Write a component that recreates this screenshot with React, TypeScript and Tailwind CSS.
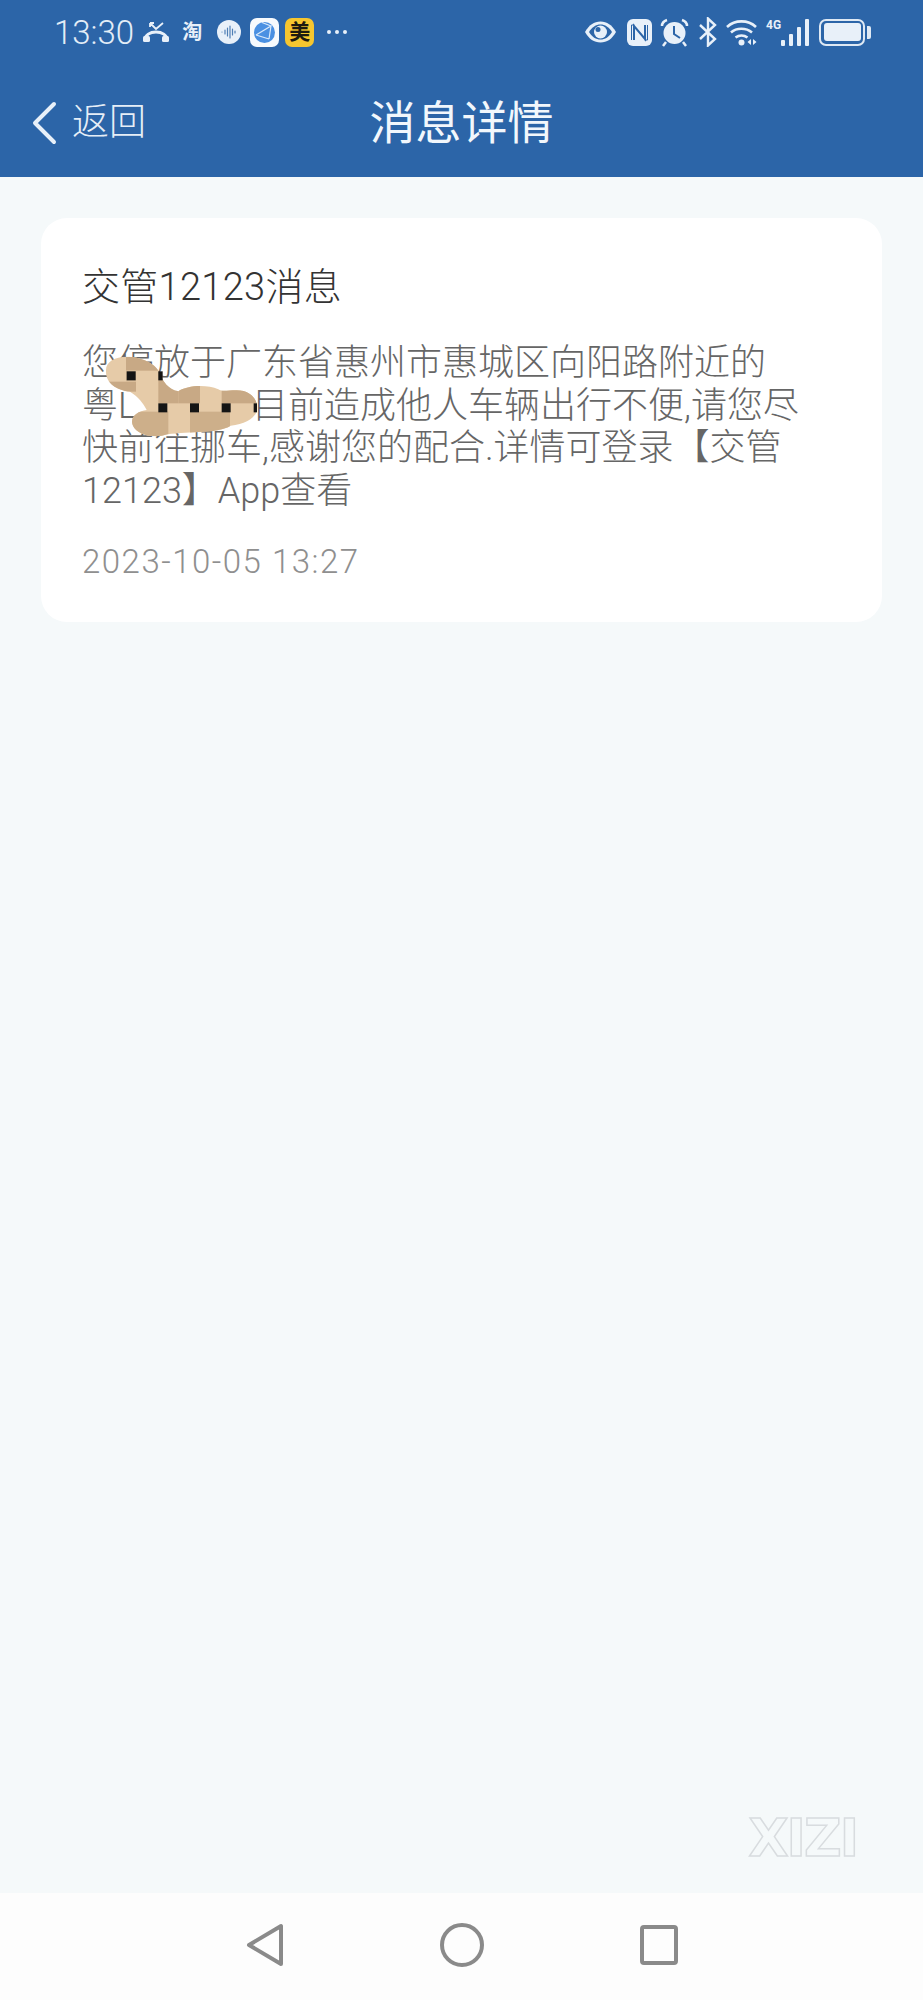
import React from 'react';

const ICON = '#e8f0f9';
const BAR = '#2c65a8';

const StatusLeft = () => (
  <div className="flex items-center">
    <span className="text-[33px] font-light leading-none text-[#e3edf7]">13:30</span>
    {/* missed call */}
    <svg className="ml-[8px]" width="28" height="22" viewBox="0 0 28 22">
      <path d="M3 19c0-5 5-8 11-8s11 3 11 8" fill="none" stroke={ICON} strokeWidth="3" />
      <rect x="1" y="15" width="7" height="6" rx="1.5" fill={ICON} />
      <rect x="20" y="15" width="7" height="6" rx="1.5" fill={ICON} />
      <path d="M8 2l6 6 7-6M8 2v4M8 2h4" fill="none" stroke={ICON} strokeWidth="1.8" />
    </svg>
    <span className="ml-[12px] w-[22px] text-[20px] font-bold leading-none text-[#e8f0f9]">淘</span>
    {/* sound circle */}
    <svg className="ml-[13px]" width="24" height="24" viewBox="0 0 24 24">
      <circle cx="12" cy="12" r="12" fill={ICON} />
      <path d="M5 12v0M8 10v4M10.500 8v8M13 6v12M15.500 9v6M18 11v2" stroke="#4f7fb5" strokeWidth="1.200" strokeLinecap="round" />
    </svg>
    {/* browser globe */}
    <svg className="ml-[9px]" width="29" height="29" viewBox="0 0 29 29">
      <rect width="29" height="29" rx="7" fill="#f7fafd" />
      <circle cx="14.500" cy="14.500" r="10.500" fill="#4a90e2" />
      <path d="M6 17l15-9-2 13M6 17l13 4M12 4.500l9 3.500" fill="none" stroke="#d9e9fa" strokeWidth="1.200" />
    </svg>
    <span className="ml-[6px] flex h-[29px] w-[29px] items-center justify-center rounded-[7px] bg-[#f6c62f] text-[21px] font-bold leading-none text-[#1d1a10]">美</span>
    <svg className="ml-[12px]" width="22" height="6" viewBox="0 0 22 6">
      <circle cx="3" cy="3" r="2" fill={ICON} />
      <circle cx="11" cy="3" r="2" fill={ICON} />
      <circle cx="19" cy="3" r="2" fill={ICON} />
    </svg>
  </div>
);

const StatusRight = () => (
  <div className="flex items-center">
    {/* eye */}
    <svg width="33" height="24" viewBox="0 0 33 24">
      <path d="M1 12C5 5 10 1.500 16.500 1.500S28 5 32 12c-4 7-9 10.500-15.500 10.500S5 19 1 12z" fill={ICON} />
      <path d="M5 12c3-5 7-7.500 11.500-7.500S25 7 28 12c-3 5-7 7.500-11.500 7.500S8 17 5 12z" fill={BAR} />
      <circle cx="16.500" cy="12" r="6.500" fill={ICON} />
      <circle cx="14" cy="9.500" r="2.500" fill={BAR} />
    </svg>
    {/* nfc */}
    <svg className="ml-[10px]" width="25" height="27" viewBox="0 0 25 27">
      <rect width="25" height="27" rx="6" fill={ICON} />
      <path d="M7 21V7l11 13V6" fill="none" stroke={BAR} strokeWidth="2" />
      <path d="M4.500 21V6h3M20.500 6v15h-3" fill="none" stroke={BAR} strokeWidth="1" />
    </svg>
    {/* alarm */}
    <svg className="ml-[8px]" width="29" height="29" viewBox="0 0 29 29">
      <circle cx="14.500" cy="15" r="11" fill={ICON} />
      <path d="M14 8v8l6 4" fill="none" stroke={BAR} strokeWidth="2" />
      <path d="M2 8c0-3 2-5 5-6M27 8c0-3-2-5-5-6M6 24l-3 4M23 24l3 4" fill="none" stroke={ICON} strokeWidth="2.500" />
    </svg>
    {/* bluetooth */}
    <svg className="ml-[9px]" width="19" height="30" viewBox="0 0 19 30">
      <path d="M2 8l15 14-7 6.500V1.500l7 6.500L2 22" fill="none" stroke={ICON} strokeWidth="2.400" />
    </svg>
    {/* wifi */}
    <svg className="ml-[9px]" width="32" height="27" viewBox="0 0 32 27">
      <path d="M1 8c8-7.500 21-7.500 29 0M5 13.500c5.500-5 15-5 21 0M9.500 18.500c3.500-2.500 8.500-2.500 12 0" fill="none" stroke={ICON} strokeWidth="2.600" />
      <circle cx="15.500" cy="23.500" r="3" fill={ICON} />
      <path d="M25 20v6l-3.500-3zM27 20v6l3.500-3z" fill={ICON} />
    </svg>
    {/* 4G + signal */}
    <div className="relative ml-[8px] h-[27px] w-[43px]">
      <span className="absolute left-0 top-0 text-[12px] font-bold leading-[12px] text-[#e8f0f9]">4G</span>
      <svg className="absolute bottom-0 right-0" width="28" height="27" viewBox="0 0 28 27">
        <rect x="0" y="21" width="4" height="6" rx="1" fill={ICON} />
        <rect x="8" y="15" width="4" height="12" rx="1" fill={ICON} />
        <rect x="16" y="8" width="4" height="19" rx="1" fill={ICON} />
        <rect x="24" y="0" width="4" height="27" rx="1" fill={ICON} />
      </svg>
    </div>
    {/* battery */}
    <div className="ml-[10px] flex items-center gap-[2px]">
      <div className="h-[27px] w-[46px] rounded-[7px] border-[2.500px] border-[#dfe9f4] p-[2.500px]">
        <div className="h-full w-full rounded-[3px] bg-[#e8f0f9]" />
      </div>
      <div className="h-[13px] w-[4px] rounded-r-[2px] bg-[#dfe9f4]" />
    </div>
  </div>
);

// mosaic smeared over the plate number
const Mosaic = () => (
  <svg className="absolute left-[49px] top-[122px]" width="190" height="110" viewBox="0 0 570 330">
    <defs>
      <clipPath id="blob">
        <path d="M48 90C48 65 75 50 110 50c40 0 85 18 97 46 10 28 30 54 58 58 25-18 85-22 120-6 12 8 25 3 55 3 40 0 62 26 62 52s-30 50-80 54c-40 24-120 16-190 26-40 15-104 0-106-38 0-20 22-32 44-35-10-20-25-40-50-55-40-5-72-25-72-60z" />
      </clipPath>
    </defs>
    <g clipPath="url(#blob)">
      <rect width="570" height="330" fill="#e6cba8" />
      <rect x="108" y="40" width="97" height="52" fill="#c8a985" />
      <rect x="50" y="125" width="88" height="30" fill="#c8a985" />
      <rect x="205" y="90" width="60" height="100" fill="#c8a985" />
      <rect x="265" y="130" width="65" height="60" fill="#c8a985" />
      <rect x="395" y="145" width="110" height="45" fill="#c8a985" />
      <rect x="120" y="215" width="115" height="80" fill="#cdaf8a" />
      <rect x="300" y="215" width="120" height="70" fill="#cdaf8a" />
      <rect x="108" y="92" width="30" height="33" fill="#d8bc98" />
    </g>
    <rect x="110" y="94" width="27" height="27" fill="#141414" />
    <rect x="205" y="94" width="13" height="27" fill="#141414" />
    <rect x="205" y="190" width="27" height="27" fill="#141414" />
    <rect x="300" y="190" width="27" height="27" fill="#141414" />
    <rect x="395" y="190" width="27" height="27" fill="#141414" />
    <rect x="491" y="190" width="10" height="27" fill="#141414" />
  </svg>
);

export default function App() {
  return (
    <div
      className="flex h-[2000px] w-[923px] flex-col overflow-hidden bg-[#f5f9fa]"
      style={{ fontFamily: 'Roboto, "Noto Sans CJK SC", sans-serif' }}
    >
      {/* Top bar */}
      <header className="h-[177px] bg-[#2c65a8]">
        <div className="flex h-[64px] items-center justify-between pl-[54px] pr-[52px]">
          <StatusLeft />
          <StatusRight />
        </div>
        <div className="grid h-[113px] grid-cols-3 items-center pt-[4px]">
          <div className="flex items-center pl-[31px]">
            <svg width="26" height="44" viewBox="0 0 26 44">
              <path d="M23 3L4 22l19 19" fill="none" stroke="#e8f0f9" strokeWidth="4" strokeLinecap="round" strokeLinejoin="round" />
            </svg>
            <span className="ml-[15px] text-[37px] font-light leading-none text-[#e6eef7]">返回</span>
          </div>
          <h1 className="whitespace-nowrap text-center text-[46px] font-normal leading-none text-[#f2f7fc]">消息详情</h1>
          <div />
        </div>
      </header>

      {/* Message */}
      <main className="flex flex-1 flex-col px-[41px] pt-[41px]">
        <section className="relative rounded-[26px] bg-white pb-[40px] pl-[41px] pr-[30px] pt-[44px]">
          <h2 className="text-[38px] font-light leading-[50px] tracking-[0.3px] text-[#333333]">交管12123消息</h2>
          <p className="mt-[30px] whitespace-nowrap text-[36px] font-light leading-[42.5px] text-[#666666]">
            您停放于广东省惠州市惠城区向阳路附近的
            <br />
            粤L<span className="inline-block w-[115px]" />目前造成他人车辆出行不便,请您尽
            <br />
            快前往挪车,感谢您的配合.详情可登录【交管
            <br />
            12123】App查看
          </p>
          <p className="mt-[30px] text-[33px] font-light leading-[40px] tracking-[1.5px] text-[#8f8f8f]">2023-10-05 13:27</p>
          <Mosaic />
        </section>
        <span
          className="mb-[30px] mr-[25px] mt-auto self-end text-[52px] font-bold leading-[50px] tracking-[-2px] text-transparent [-webkit-text-stroke:1.5px_#d8dcdf]"
          style={{ fontFamily: '"DejaVu Sans", sans-serif' }}
        >
          XIZI
        </span>
      </main>

      {/* System nav */}
      <nav className="flex h-[107px] items-center justify-center gap-[156px] bg-[#fdfdfd] pb-[4px]">
        <svg width="38" height="44" viewBox="0 0 38 44">
          <path d="M35 3v38L3 22z" fill="none" stroke="#8a8a8a" strokeWidth="4" strokeLinejoin="round" />
        </svg>
        <svg width="44" height="44" viewBox="0 0 44 44">
          <circle cx="22" cy="22" r="20" fill="none" stroke="#8a8a8a" strokeWidth="4" />
        </svg>
        <svg width="38" height="40" viewBox="0 0 38 40">
          <rect x="2" y="2" width="34" height="36" rx="2" fill="none" stroke="#8a8a8a" strokeWidth="4" />
        </svg>
      </nav>
    </div>
  );
}
